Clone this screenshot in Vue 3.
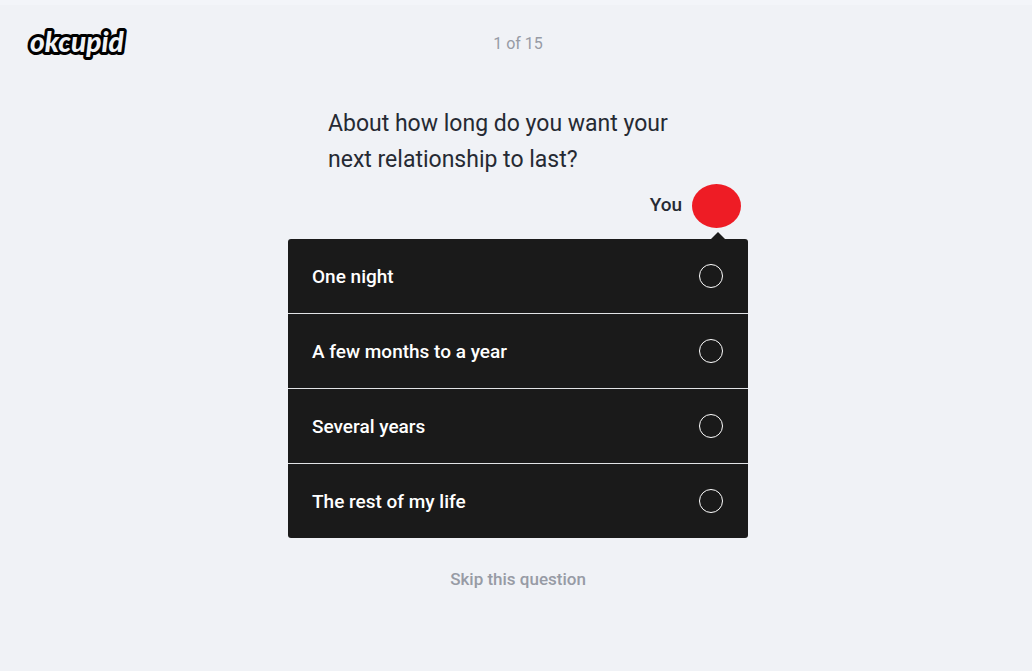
<script setup>
import { ref } from 'vue'

const options = ['One night', 'A few months to a year', 'Several years', 'The rest of my life']
const answer = ref('')
</script>

<template>
  <div class="page">
    <header class="header">
      <a class="logo" href="#" aria-label="okcupid">
        <svg width="104" height="40" viewBox="0 0 104 40" aria-hidden="true">
          <text class="logo-outline" x="6" y="28">okcupid</text>
          <text class="logo-fill" x="6" y="28">okcupid</text>
        </svg>
      </a>
      <p class="progress">1 of 15</p>
    </header>
    <main class="question">
      <h1 id="question-title" class="title">About how long do you want your next relationship to last?</h1>
      <div class="you">
        <span>You</span>
        <span class="avatar"></span>
      </div>
      <div class="options" role="radiogroup" aria-labelledby="question-title">
        <label v-for="option in options" :key="option" class="option">
          <span>{{ option }}</span>
          <input v-model="answer" class="radio" type="radio" name="answer" :value="option" />
        </label>
      </div>
      <button class="skip" type="button">Skip this question</button>
    </main>
  </div>
</template>

<style>
body {
  background: #f0f2f6;
}
</style>

<style scoped>
.page {
  box-sizing: border-box;
  min-height: 100vh;
  padding-left: 4px;
  border-top: 5px solid #f3f5f9;
  background: #f0f2f6;
  color: #262a33;
  font-family: Roboto, "Liberation Sans", sans-serif;
}
.header {
  display: grid;
  grid-template-columns: 1fr auto 1fr;
  align-items: center;
  height: 77px;
  padding: 0 20px;
}
.logo {
  display: block;
  width: 104px;
  height: 40px;
}
.logo svg {
  display: block;
  overflow: visible;
}
.logo text {
  font-family: Lato, "Noto Sans", sans-serif;
  font-size: 28px;
  font-style: italic;
  font-weight: 900;
}
.logo-outline {
  fill: #000;
  stroke: #000;
  stroke-width: 6px;
  stroke-linejoin: round;
}
.logo-fill {
  fill: #f0f2f6;
}
.progress {
  margin: 0;
  color: #979ba5;
  font-size: 16px;
  line-height: 24px;
}
.question {
  display: flex;
  flex-direction: column;
  max-width: 460px;
  margin: 0 auto;
  padding-top: 24px;
}
.title {
  margin: 0;
  padding: 0 40px;
  font-size: 23px;
  font-weight: 400;
  line-height: 36px;
}
.you {
  display: flex;
  justify-content: flex-end;
  align-items: center;
  gap: 10px;
  margin: 6px 7px 11px 0;
  font-size: 19px;
  font-weight: 500;
  line-height: 24px;
}
.you span:first-child {
  padding-bottom: 2px;
}
.avatar {
  width: 49px;
  height: 44px;
  border-radius: 50%;
  background: #ee1c25;
}
.options {
  position: relative;
  border-radius: 3px;
  background: #1a1a1a;
}
.options::before {
  content: "";
  position: absolute;
  right: 23px;
  bottom: 100%;
  border: 7px solid transparent;
  border-top-width: 0;
  border-bottom-color: #1a1a1a;
}
.option {
  display: flex;
  justify-content: space-between;
  align-items: center;
  height: 74px;
  padding: 0 25px 0 24px;
  color: #fff;
  font-size: 19px;
  font-weight: 500;
  cursor: pointer;
}
.option + .option {
  border-top: 1px solid #e1e3e6;
}
.radio {
  appearance: none;
  box-sizing: border-box;
  width: 24px;
  height: 24px;
  margin: 0;
  border: 1px solid #fff;
  border-radius: 50%;
}
.radio:checked {
  box-shadow: inset 0 0 0 5px #1a1a1a;
  background: #fff;
}
.skip {
  align-self: center;
  margin-top: 29px;
  padding: 0;
  border: 0;
  background: none;
  color: #979ba5;
  font: inherit;
  font-size: 17px;
  font-weight: 500;
  line-height: 24px;
  cursor: pointer;
}
</style>
